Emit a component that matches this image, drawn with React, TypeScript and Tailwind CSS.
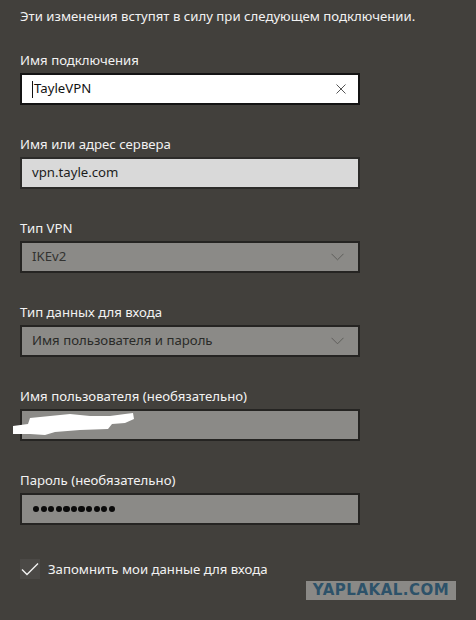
import React from "react";

const font = { fontFamily: '"Noto Sans", "Open Sans", sans-serif' };

function Chevron() {
  return (
    <svg width="13" height="8" viewBox="0 0 13 8" className="shrink-0">
      <path d="M0.5 0.8 L6.5 6.8 L12.5 0.8" fill="none" stroke="#5f5e5b" strokeWidth="1" />
    </svg>
  );
}

function Label({ children }: { children: React.ReactNode }) {
  return <div className="h-[20px] leading-[20px] text-[13.2px] text-[#f2f2f2]">{children}</div>;
}

export default function App() {
  return (
    <div className="w-[476px] h-[620px] bg-[#42403c] relative overflow-hidden" style={font}>
      <div className="flex flex-col pl-[20px] pt-[6px]">
        <div className="h-[20px] leading-[20px] text-[13.2px] text-[#f2f2f2]">
          Эти изменения вступят в силу при следующем подключении.
        </div>

        <div className="mt-[24px] flex flex-col gap-[3px]">
          <Label>Имя подключения</Label>
          <div className="w-[340px] h-[32px] border-2 border-[#141414] bg-white flex items-center pl-[10px] pr-[10px]">
            <div className="w-px h-[17px] bg-[#111]" />
            <span className="ml-[1px] text-[13.2px] text-[#111] flex-1">TayleVPN</span>
            <svg width="10" height="10" viewBox="0 0 10 10" className="mr-[2px]">
              <path d="M0.5 0.5 L9.5 9.5 M9.5 0.5 L0.5 9.5" stroke="#555" strokeWidth="1" />
            </svg>
          </div>
        </div>

        <div className="mt-[29px] flex flex-col gap-[3px]">
          <Label>Имя или адрес сервера</Label>
          <div className="w-[340px] h-[32px] border-2 border-[#2c2b29] bg-[#d9d9d9] flex items-center pl-[10px]">
            <span className="text-[13.2px] text-[#1c1c1c]">vpn.tayle.com</span>
          </div>
        </div>

        <div className="mt-[29px] flex flex-col gap-[3px]">
          <Label>Тип VPN</Label>
          <div className="w-[340px] h-[32px] border-2 border-[#252422] bg-[#8b8a87] flex items-center pl-[10px] pr-[14px]">
            <span className="text-[13.2px] text-[#333331] flex-1">IKEv2</span>
            <Chevron />
          </div>
        </div>

        <div className="mt-[29px] flex flex-col gap-[3px]">
          <Label>Тип данных для входа</Label>
          <div className="w-[340px] h-[32px] border-2 border-[#252422] bg-[#8b8a87] flex items-center pl-[10px] pr-[14px]">
            <span className="text-[13.2px] text-[#2a2a28] flex-1">Имя пользователя и пароль</span>
            <Chevron />
          </div>
        </div>

        <div className="mt-[29px] flex flex-col gap-[3px]">
          <Label>Имя пользователя (необязательно)</Label>
          <div className="w-[340px] h-[32px] border-2 border-[#252422] bg-[#8b8a87]" />
        </div>

        <div className="mt-[29px] flex flex-col gap-[3px]">
          <Label>Пароль (необязательно)</Label>
          <div className="w-[340px] h-[32px] border-2 border-[#252422] bg-[#8b8a87] flex items-center pl-[11px] gap-[1.4px]">
            {Array.from({ length: 11 }).map((_, i) => (
              <div key={i} className="w-[6.2px] h-[6.2px] rounded-full bg-[#0a0a0a]" />
            ))}
          </div>
        </div>

        <div className="mt-[34px] flex items-center gap-[8px]">
          <div className="w-[20px] h-[20px] bg-[#4b4946] flex items-center justify-center">
            <svg width="18" height="14" viewBox="0 0 18 14">
              <path d="M1 7.5 L6 12.5 L17 1.5" fill="none" stroke="#f2f2f2" strokeWidth="1.4" />
            </svg>
          </div>
          <span className="text-[13.2px] text-[#f2f2f2] leading-[20px]">Запомнить мои данные для входа</span>
        </div>
      </div>

      {/* scribble over username */}
      <svg className="absolute left-[12px] top-[410px]" width="126" height="28" viewBox="0 0 126 28">
        <path
          d="M1 16 L16 14 L18 8 L38 6 L58 4 L78 6 L98 6 L113 4 L121 3 L122 9 L113 13 L100 14 L96 19 L68 20 L43 22 L33 25 L18 24 L1 24 Z"
          fill="#ffffff"
        />
      </svg>

      {/* watermark */}
      <div className="absolute left-[306px] top-[581px] w-[150px] h-[19px] bg-[#8a8986] flex items-center justify-center">
        <span
          className="text-[15px] font-black tracking-[0.5px] text-[#2d5269] leading-none"
          style={{ fontFamily: '"DejaVu Sans", sans-serif' }}
        >
          YAPLAKAL.COM
        </span>
      </div>
    </div>
  );
}
